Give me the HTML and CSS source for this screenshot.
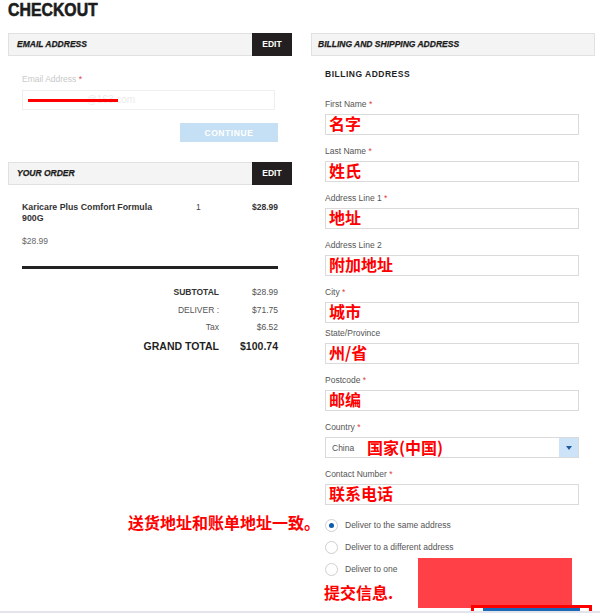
FILE: index.html
```html
<!DOCTYPE html>
<html lang="en">
<head>
  <meta charset="UTF-8">
  <meta name="viewport" content="width=device-width, initial-scale=1">
  <title>Checkout</title>
  <link rel="stylesheet" href="styles.css">
</head>
<body>

<h1 class="page-title"><span>CHECKOUT</span></h1>

<div class="checkout">
  <div class="col">
    <section class="panel">
      <div class="panel-head">
        <h2>EMAIL ADDRESS</h2>
        <a class="edit-btn">EDIT</a>
      </div>
      <div class="email-body">
        <div class="field-label faded">Email Address <span class="req">*</span></div>
        <div class="email-box">
          <span class="ghost">&middot;&middot; &middot;&middot;&nbsp;&nbsp;@163.com</span>
          <span class="redact"></span>
        </div>
        <div class="btn-row"><button class="continue-btn">CONTINUE</button></div>
      </div>
    </section>

    <section class="panel order-panel">
      <div class="panel-head">
        <h2>YOUR ORDER</h2>
        <a class="edit-btn">EDIT</a>
      </div>
      <div class="order-body">
        <div class="order-item">
          <div class="item-name">Karicare Plus Comfort Formula 900G</div>
          <div class="item-qty">1</div>
          <div class="item-price">$28.99</div>
        </div>
        <div class="unit-price">$28.99</div>
        <div class="order-rule"></div>
        <div class="totals">
          <div class="t-label strong">SUBTOTAL</div><div class="t-value">$28.99</div>
          <div class="t-label">DELIVER :</div><div class="t-value">$71.75</div>
          <div class="t-label">Tax</div><div class="t-value">$6.52</div>
          <div class="t-label grand">GRAND TOTAL</div><div class="t-value grand">$100.74</div>
        </div>
      </div>
    </section>
  </div>

  <div class="col">
    <section class="panel">
      <div class="panel-head">
        <h2>BILLING AND SHIPPING ADDRESS</h2>
      </div>
      <div class="billing-body">
        <h3 class="sub-title">BILLING ADDRESS</h3>

        <div class="fields">
          <div class="field">
            <div class="field-label">First Name <span class="req">*</span></div>
            <div class="text-box"><span class="note">名字</span></div>
          </div>
          <div class="field">
            <div class="field-label">Last Name <span class="req">*</span></div>
            <div class="text-box"><span class="note">姓氏</span></div>
          </div>
          <div class="field">
            <div class="field-label">Address Line 1 <span class="req">*</span></div>
            <div class="text-box"><span class="note">地址</span></div>
          </div>
          <div class="field">
            <div class="field-label">Address Line 2</div>
            <div class="text-box"><span class="note">附加地址</span></div>
          </div>
          <div class="field tight">
            <div class="field-label">City <span class="req">*</span></div>
            <div class="text-box"><span class="note">城市</span></div>
          </div>
          <div class="field">
            <div class="field-label">State/Province</div>
            <div class="text-box"><span class="note">州/省</span></div>
          </div>
          <div class="field">
            <div class="field-label">Postcode <span class="req">*</span></div>
            <div class="text-box"><span class="note">邮编</span></div>
          </div>
          <div class="field">
            <div class="field-label">Country <span class="req">*</span></div>
            <div class="select-box">
              <span class="select-value">China</span>
              <span class="note">国家(中国)</span>
              <span class="select-arrow"></span>
            </div>
          </div>
          <div class="field last">
            <div class="field-label">Contact Number <span class="req">*</span></div>
            <div class="text-box"><span class="note">联系电话</span></div>
          </div>
        </div>

        <ul class="radio-list">
          <li class="radio-row">
            <span class="radio checked"></span>Deliver to the same address
            <span class="note side-note">送货地址和账单地址一致。</span>
          </li>
          <li class="radio-row"><span class="radio"></span>Deliver to a different address</li>
          <li class="radio-row"><span class="radio"></span>Deliver to one</li>
        </ul>

        <div class="note submit-note">提交信息.</div>
      </div>
    </section>
  </div>
</div>

<!-- annotation marks on top of the shot -->
<div class="cover-block"></div>
<div class="submit-mark"></div>
<div class="bottom-edge"></div>

</body>
</html>
```

FILE: styles.css
```css
html {
  overflow: hidden;
}

body {
  margin: 0;
  font-family: "Liberation Sans", Arial, sans-serif;
  font-size: 8.5px;
  color: #555;
  background: #fff;
}

.page-title {
  margin: 0;
  padding: 0 8px;
  height: 33px;
  font-size: 18px;
  line-height: 20px;
  font-weight: bold;
  color: #1c1c1c;
  -webkit-text-stroke: 0.6px #1c1c1c;
}

.page-title span {
  display: inline-block;
  transform: scaleX(0.88);
  transform-origin: left center;
}

.checkout {
  display: grid;
  grid-template-columns: 284px 284px;
  column-gap: 19px;
  padding: 0 8px;
}

/* panel headers */
.panel-head {
  display: flex;
  align-items: stretch;
  height: 23px;
  box-sizing: border-box;
  border: 1px solid #e1e1e1;
  background: #f4f4f4;
}

.panel-head h2 {
  flex: 1;
  margin: 0;
  padding-left: 8px;
  font-size: 8.5px;
  line-height: 21px;
  font-weight: bold;
  font-style: italic;
  color: #1a1a1a;
  -webkit-text-stroke: 0.25px #1a1a1a;
}

.col:last-child .panel-head h2 {
  padding-left: 6px;
}

.edit-btn {
  width: 40px;
  margin: -1px -1px -1px 0;
  background: #231f20;
  color: #fff;
  font-weight: bold;
  font-size: 8.5px;
  line-height: 23px;
  text-align: center;
}

.field-label {
  line-height: 11px;
  color: #555;
}

.field-label.faded {
  color: #c9c9c9;
}

.req {
  color: #e23c3c;
}

/* email */
.email-body {
  padding: 18px 14px 0 14px;
}

.email-box {
  position: relative;
  margin: 5px 3px 0 0;
  height: 20px;
  box-sizing: border-box;
  border: 1px solid #efefef;
}

.ghost {
  position: absolute;
  left: 42px;
  top: 3px;
  color: #ebebeb;
  font-size: 10px;
}

.redact {
  position: absolute;
  left: 5px;
  top: 8px;
  width: 90px;
  height: 3px;
  background: #f00;
}

.btn-row {
  margin-top: 13px;
  text-align: right;
}

.continue-btn {
  width: 98px;
  height: 19px;
  padding: 0;
  border: 0;
  background: #c5dff4;
  color: #fff;
  font-family: inherit;
  font-size: 8.5px;
  font-weight: bold;
  letter-spacing: 0.6px;
}

/* order */
.order-panel {
  margin-top: 20px;
}

.order-body {
  padding: 17px 14px 0 14px;
}

.order-item {
  display: grid;
  grid-template-columns: 174px 1fr auto;
  line-height: 11px;
}

.item-name {
  max-width: 145px;
  font-weight: bold;
  font-size: 8.8px;
  color: #333;
}

.item-qty {
  color: #444;
}

.item-price {
  font-weight: bold;
  color: #333;
}

.unit-price {
  margin-top: 12px;
  line-height: 11px;
  color: #666;
}

.order-rule {
  margin-top: 19px;
  height: 3px;
  background: #222;
}

.totals {
  display: grid;
  grid-template-columns: 1fr 59px;
  row-gap: 6.5px;
  margin-top: 18px;
  line-height: 11px;
  text-align: right;
}

.t-label.strong {
  font-weight: bold;
  color: #333;
}

.totals .grand {
  font-size: 10.5px;
  line-height: 13px;
  font-weight: bold;
  color: #1f1f1f;
}

/* billing */
.billing-body {
  position: relative;
  padding: 0 16px 0 14px;
}

.sub-title {
  margin: 12px 0 0;
  font-size: 8.5px;
  line-height: 12px;
  letter-spacing: 0.5px;
  color: #1f1f1f;
}

.fields {
  margin-top: 19px;
}

.field {
  margin-bottom: 11px;
}

.field.tight {
  margin-bottom: 5px;
}

.field.last {
  margin-bottom: 9px;
}

.field .field-label {
  margin-bottom: 4px;
}

.text-box,
.select-box {
  position: relative;
  height: 21px;
  box-sizing: border-box;
  border: 1px solid #dadada;
  background: #fff;
}

.note {
  font-family: "Noto Sans CJK SC", sans-serif;
  font-size: 16px;
  font-weight: bold;
  color: #f00;
  line-height: 17px;
  white-space: nowrap;
}

.text-box .note {
  padding-left: 3px;
}

.select-box {
  display: flex;
  align-items: center;
  padding-left: 6px;
}

.select-value {
  width: 35px;
  color: #555;
}

.select-arrow {
  position: absolute;
  top: 0;
  right: 0;
  width: 19px;
  height: 19px;
  background: #cde4f8;
}

.select-arrow::after {
  content: "";
  position: absolute;
  left: 7px;
  top: 8px;
  border-left: 3px solid transparent;
  border-right: 3px solid transparent;
  border-top: 4px solid #1e5aa0;
}

.radio-list {
  margin: 0;
  padding: 0;
  list-style: none;
}

.radio-row {
  position: relative;
  display: flex;
  align-items: center;
  height: 22px;
  color: #555;
}

.radio {
  position: relative;
  width: 13px;
  height: 13px;
  margin-right: 7px;
  box-sizing: border-box;
  border: 1px solid #cfcfcf;
  border-radius: 50%;
  background: #fff;
}

.radio.checked::after {
  content: "";
  position: absolute;
  left: 3px;
  top: 3px;
  width: 5px;
  height: 5px;
  border-radius: 50%;
  background: #0d5cae;
}

.side-note {
  position: absolute;
  right: calc(100% + 5px);
  top: 0;
}

.submit-note {
  margin: 3px 0 0 -1px;
  line-height: 18px;
}

/* marks drawn over the shot */
.cover-block {
  position: absolute;
  left: 418px;
  top: 558px;
  width: 154px;
  height: 50px;
  background: #ff4046;
}

.submit-mark {
  position: absolute;
  left: 471px;
  top: 605px;
  width: 121px;
  height: 30px;
  box-sizing: border-box;
  border: 3px solid #f00;
  background: #fff;
}

.submit-mark::before {
  content: "";
  position: absolute;
  left: 9px;
  right: 9px;
  top: 0;
  height: 3px;
  background: #1a68b6;
}

.bottom-edge {
  position: fixed;
  left: 0;
  right: 0;
  bottom: 0;
  height: 2px;
  background: #e4e4ec;
}
```
